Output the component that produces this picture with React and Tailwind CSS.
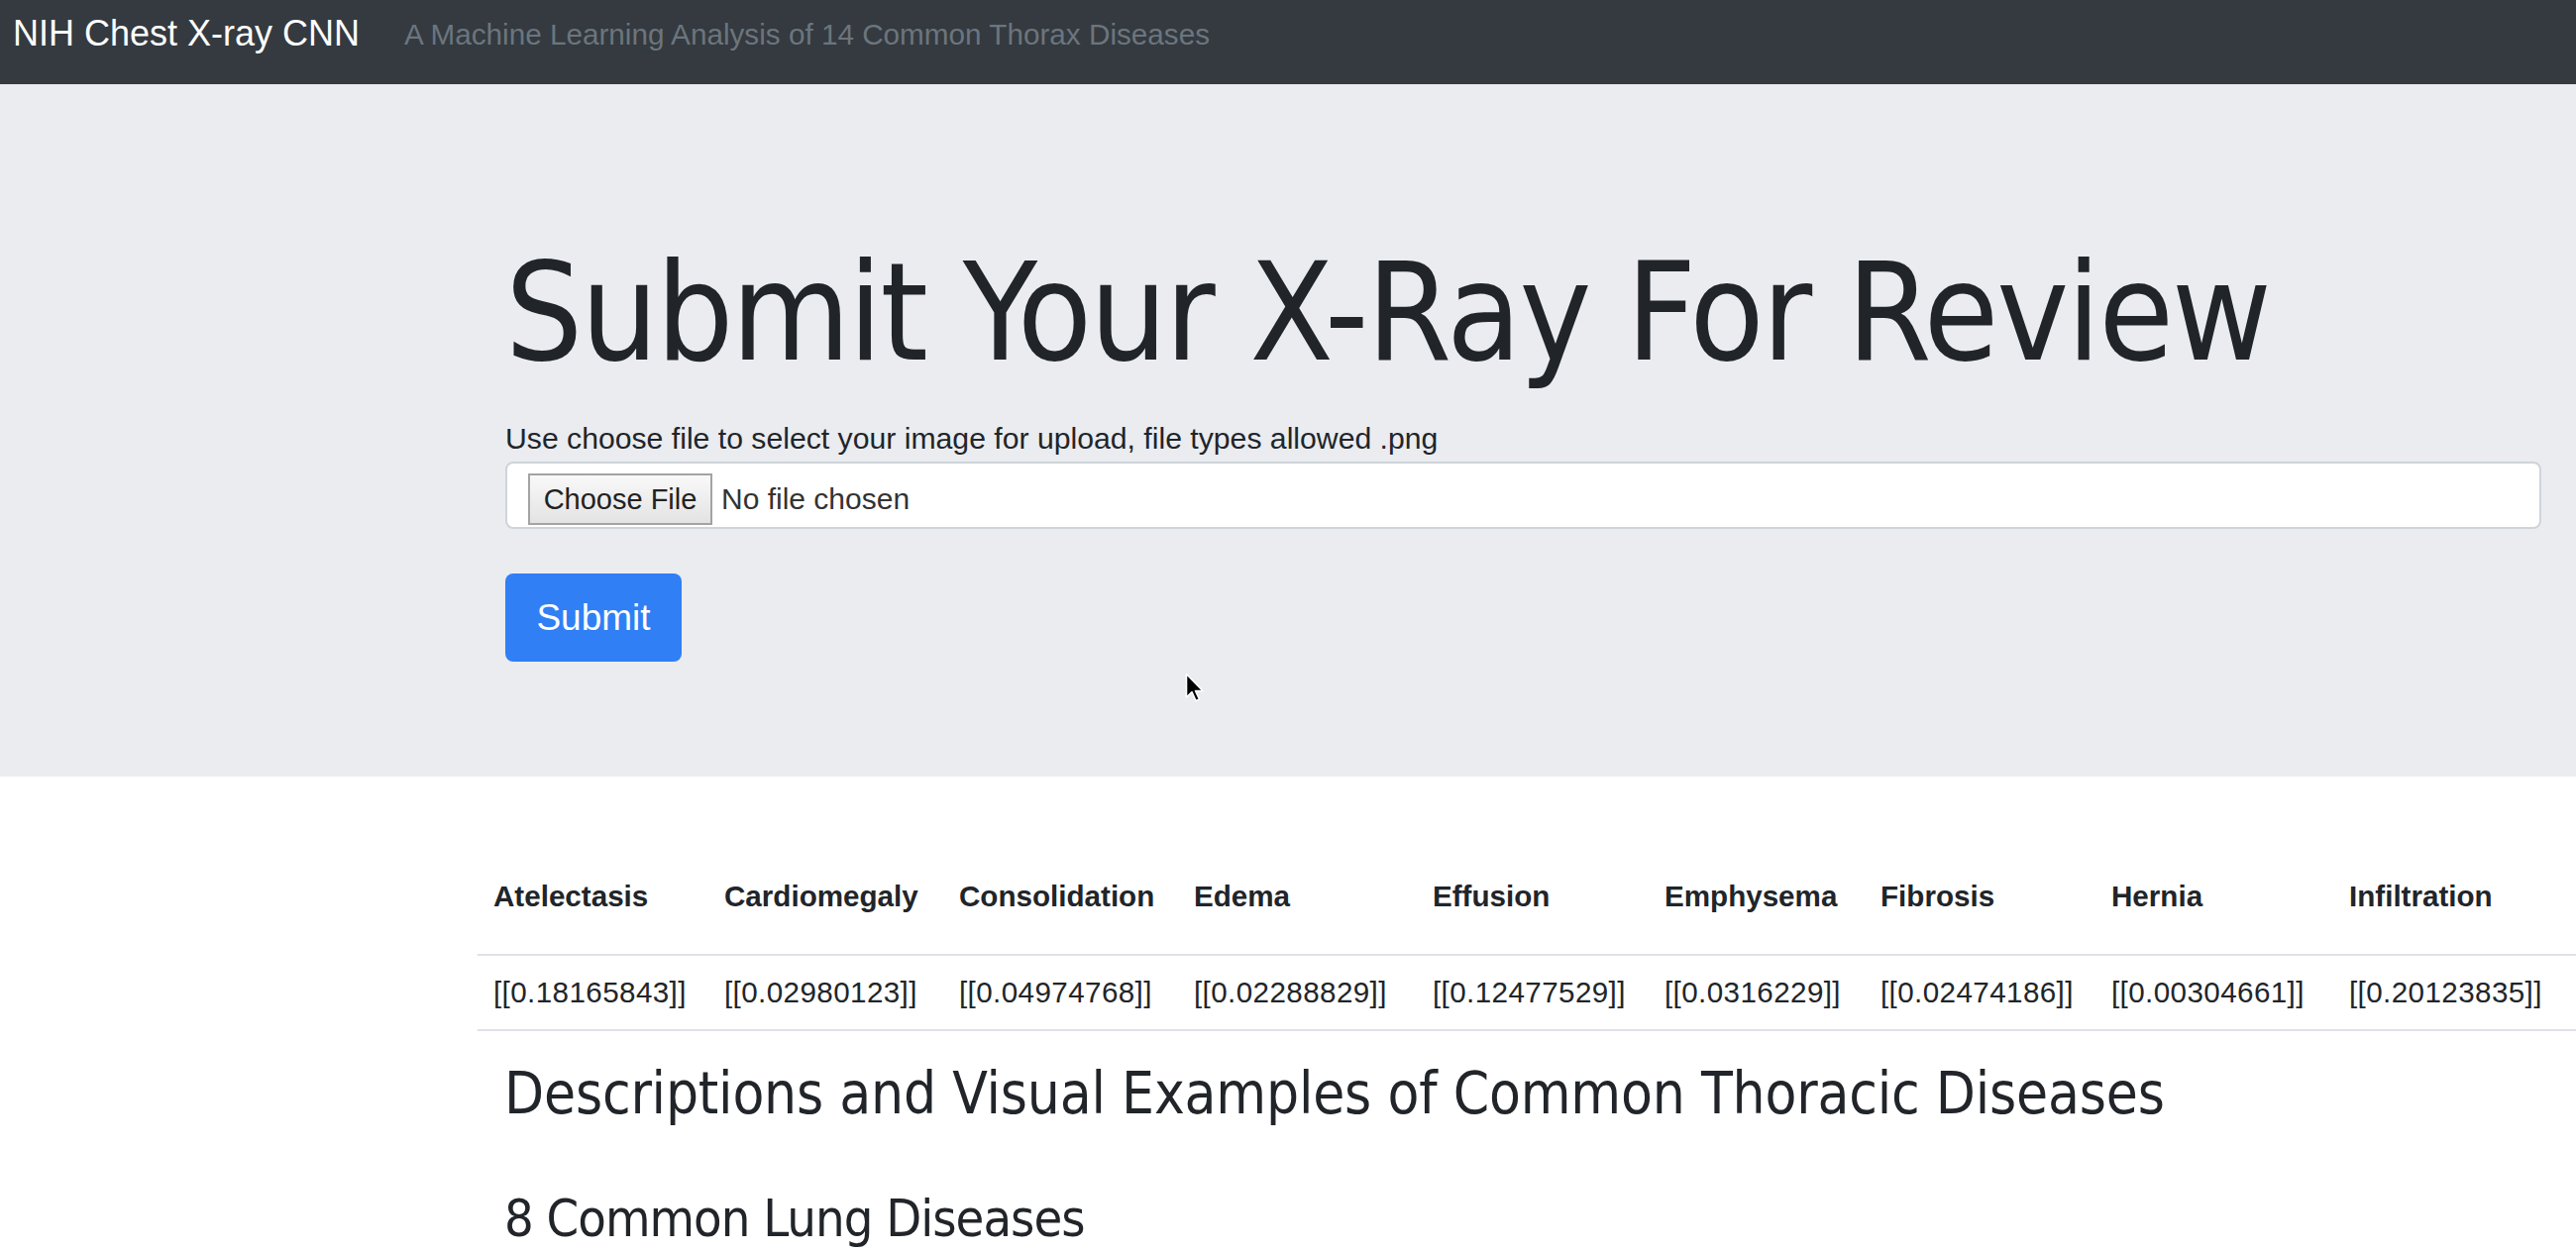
import React from "react";

const cols = [
  { name: "Atelectasis", val: "[[0.18165843]]", w: "w-[233px]" },
  { name: "Cardiomegaly", val: "[[0.02980123]]", w: "w-[237px]" },
  { name: "Consolidation", val: "[[0.04974768]]", w: "w-[237px]" },
  { name: "Edema", val: "[[0.02288829]]", w: "w-[241px]" },
  { name: "Effusion", val: "[[0.12477529]]", w: "w-[234px]" },
  { name: "Emphysema", val: "[[0.0316229]]", w: "w-[218px]" },
  { name: "Fibrosis", val: "[[0.02474186]]", w: "w-[233px]" },
  { name: "Hernia", val: "[[0.00304661]]", w: "w-[240px]" },
  { name: "Infiltration", val: "[[0.20123835]]", w: "w-[240px]" },
  { name: "Mass", val: "[[0.05281342]]", w: "w-[232px]" },
  { name: "Nodule", val: "[[0.06917225]]", w: "w-[232px]" },
  { name: "Pleural_Thickening", val: "[[0.03815774]]", w: "w-[300px]" },
  { name: "Pneumonia", val: "[[0.01406521]]", w: "w-[232px]" },
  { name: "Pneumothorax", val: "[[0.04428903]]", w: "w-[250px]" },
];

export default function App() {
  return (
    <div className="w-[2600px] min-h-[1264px] overflow-hidden bg-white text-[#212529] font-['Liberation_Sans',Arial,sans-serif]">
      <nav className="flex items-start h-[85px] bg-[#343a40] pl-[13px]">
        <span className="mt-[16px] text-[36px] leading-none text-white whitespace-nowrap">
          NIH Chest X-ray CNN
        </span>
        <span className="ml-[45px] mt-[20px] text-[29.7px] leading-none text-[#6c757d] whitespace-nowrap">
          A Machine Learning Analysis of 14 Common Thorax Diseases
        </span>
      </nav>

      <section className="relative h-[699px] bg-[#eaecf0] pl-[510px] pr-[35px] pt-[162px]">
        <h1 className="font-['DejaVu_Sans_Condensed','DejaVu_Sans',sans-serif] text-[137px] leading-none font-normal whitespace-nowrap tracking-[-2.1px]">
          Submit Your X-Ray For Review
        </h1>
        <label className="block mt-[44px] text-[30.2px] leading-none whitespace-nowrap">
          Use choose file to select your image for upload, file types allowed .png
        </label>
        <div className="mt-[8px] h-[68px] flex items-center bg-white border-2 border-[#ced4da] rounded-[8px] pl-[21px] pt-[8px]">
          <div className="h-[52px] w-[186px] flex items-center justify-center border-2 border-[#a3a3a3] bg-linear-to-b from-[#f9f9f9] to-[#e3e3e3] text-[29px] leading-none text-[#222]">
            Choose File
          </div>
          <span className="ml-[9px] text-[30px] leading-none text-[#333]">No file chosen</span>
        </div>
        <div className="mt-[45px] w-[178px] h-[89px] rounded-[8px] bg-[#307ff5] text-white text-[37px] leading-none flex items-center justify-center">
          Submit
        </div>
        <svg
          className="absolute left-[1196px] top-[594px]"
          width="22"
          height="32"
          viewBox="0 0 22 32"
        >
          <path
            d="M1.5 1.5 L1.5 25 L7 19.5 L11 28.5 L14.5 27 L10.5 18.5 L18 18.5 Z"
            fill="#000"
            stroke="#fff"
            strokeWidth="1.6"
            strokeLinejoin="round"
          />
        </svg>
      </section>

      <div className="pl-[482px] pt-[84px]">
        <table className="table-fixed w-[3309px] text-[29.6px]">
          <thead>
            <tr>
              {cols.map((c) => (
                <th
                  key={c.name}
                  className={`${c.w} text-left font-bold px-[16px] pt-[15px] pb-[36px] leading-[44px] border-b-2 border-[#dee2e6] whitespace-nowrap align-bottom`}
                >
                  {c.name}
                </th>
              ))}
            </tr>
          </thead>
          <tbody>
            <tr>
              {cols.map((c) => (
                <td
                  key={c.name}
                  className="px-[16px] py-[15px] leading-[44px] border-b-2 border-[#dee2e6] whitespace-nowrap tracking-[0.4px]"
                >
                  {c.val}
                </td>
              ))}
            </tr>
          </tbody>
        </table>
      </div>

      <div className="pl-[509px] font-['DejaVu_Sans_Condensed','DejaVu_Sans',sans-serif]">
        <h2 className="mt-[34px] text-[58px] leading-none font-normal whitespace-nowrap tracking-[-0.2px]">
          Descriptions and Visual Examples of Common Thoracic Diseases
        </h2>
        <h3 className="mt-[71px] text-[52px] leading-none font-normal whitespace-nowrap tracking-[-1px]">
          8 Common Lung Diseases
        </h3>
      </div>
    </div>
  );
}
